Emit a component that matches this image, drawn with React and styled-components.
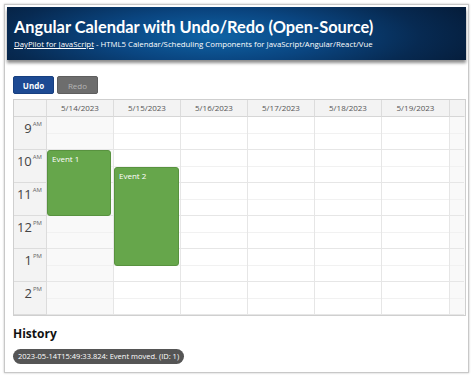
import React from 'react';
import styled, { createGlobalStyle } from 'styled-components';

const HOUR = 33;
const days = ['5/14/2023', '5/15/2023', '5/16/2023', '5/17/2023', '5/18/2023', '5/19/2023'];
const hours = [
  { h: '9', p: 'AM' },
  { h: '10', p: 'AM' },
  { h: '11', p: 'AM' },
  { h: '12', p: 'PM' },
  { h: '1', p: 'PM' },
  { h: '2', p: 'PM' },
];
const events = [
  { id: 1, day: 0, text: 'Event 1', start: 1, end: 3, width: 64 },
  { id: 2, day: 1, text: 'Event 2', start: 1.5, end: 4.5, width: 65 },
];

export default function App() {
  return (
    <>
      <GlobalStyle />
      <Frame>
        <Header>
          <Title>Angular Calendar with Undo/Redo (Open-Source)</Title>
          <Subtitle>
            <a href="#">DayPilot for JavaScript</a> - HTML5 Calendar/Scheduling Components for JavaScript/Angular/React/Vue
          </Subtitle>
        </Header>
        <Main>
          <Toolbar>
            <Button primary>Undo</Button>
            <Button>Redo</Button>
          </Toolbar>
          <Calendar>
            <HeadCell />
            {days.map(d => (
              <HeadCell key={d}>{d}</HeadCell>
            ))}
            <HeadCell $end />
            <TimeColumn>
              {hours.map(t => (
                <TimeCell key={t.h}>
                  {t.h}
                  <sup>{t.p}</sup>
                </TimeCell>
              ))}
            </TimeColumn>
            {days.map((d, i) => (
              <DayColumn key={d} $weekend={i === 0}>
                {hours.map(t => (
                  <Slot key={t.h} />
                ))}
                {events
                  .filter(e => e.day === i)
                  .map(e => (
                    <Event
                      key={e.id}
                      style={{ top: e.start * HOUR, height: (e.end - e.start) * HOUR, width: e.width }}
                    >
                      {e.text}
                    </Event>
                  ))}
              </DayColumn>
            ))}
            <DayColumn $weekend $end>
              {hours.map(t => (
                <Slot key={t.h} />
              ))}
            </DayColumn>
          </Calendar>
          <HistoryTitle>History</HistoryTitle>
          <Pill>2023-05-14T15:49:33.824: Event moved. (ID: 1)</Pill>
        </Main>
      </Frame>
    </>
  );
}

const GlobalStyle = createGlobalStyle`
  body {
    margin: 0;
    background: #fff;
    font-family: "Open Sans", "Noto Sans", sans-serif;
  }
`;

const Frame = styled.div`
  margin: 4px;
  width: 465px;
  height: 369px;
  box-sizing: border-box;
  border: 1px solid #c8c8c8;
  box-shadow: 0 0 2px rgba(0, 0, 0, 0.25);
  padding: 2px 2px 0 2px;
  overflow: hidden;
`;

const Header = styled.div`
  height: 53px;
  box-sizing: border-box;
  padding: 9px 7px 0;
  background: radial-gradient(ellipse 60% 120% at 45% 55%, #0f64a6 0%, #0a4580 40%, #072a52 75%, #051d3b 100%);
  box-shadow: 0 3px 3px rgba(0, 0, 0, 0.45);
  color: #fff;
`;

const Title = styled.h1`
  margin: 0;
  font-family: Lato, "Open Sans", sans-serif;
  font-size: 16.4px;
  line-height: 22px;
  font-weight: 700;
`;

const Subtitle = styled.div`
  font-size: 7.8px;
  line-height: 12px;
  a {
    color: #fff;
    text-decoration: underline;
  }
`;

const Main = styled.div`
  padding: 16px 0 0 6px;
`;

const Toolbar = styled.div`
  display: flex;
  gap: 3px;
`;

const Button = styled.button`
  width: 41px;
  height: 18px;
  padding: 0;
  border: 1px solid ${p => (p.primary ? '#173f80' : '#5e5e5e')};
  border-radius: 2px;
  background: ${p => (p.primary ? '#1d4a93' : '#6d6d6d')};
  color: ${p => (p.primary ? '#fff' : '#b5b5b5')};
  font-family: inherit;
  font-size: 8px;
  font-weight: ${p => (p.primary ? 700 : 400)};
`;

const Calendar = styled.div`
  margin-top: 5px;
  width: 453px;
  box-sizing: border-box;
  border: 1px solid #cfcfcf;
  display: grid;
  grid-template-columns: 33px repeat(5, 67px) 68px 1fr;
  grid-template-rows: 17px auto;
`;

const HeadCell = styled.div`
  background: #f3f3f3;
  border-right: 1px solid ${p => (p.$end ? 'transparent' : '#dcdcdc')};
  border-bottom: 1px solid #d6d6d6;
  box-sizing: border-box;
  color: #555;
  font-size: 8px;
  line-height: 16px;
  text-align: center;
`;

const TimeColumn = styled.div`
  background: #f3f3f3;
  border-right: 1px solid #dcdcdc;
`;

const TimeCell = styled.div`
  height: ${HOUR}px;
  box-sizing: border-box;
  border-bottom: 1px solid #dcdcdc;
  padding: 3px 4px 0 0;
  text-align: right;
  color: #444;
  font-size: 13px;
  line-height: 16px;
  sup {
    font-size: 6px;
    vertical-align: top;
    line-height: 8px;
    margin-left: 1px;
    color: #666;
  }
`;

const DayColumn = styled.div`
  position: relative;
  background: ${p => (p.$weekend ? '#f9f9f9' : '#fff')};
  border-right: 1px solid ${p => (p.$end ? 'transparent' : '#e6e6e6')};
`;

const Slot = styled.div`
  height: ${HOUR}px;
  box-sizing: border-box;
  border-bottom: 1px solid #e6e6e6;
  background: linear-gradient(to bottom, transparent 16px, #f1f1f1 16px, #f1f1f1 17px, transparent 17px);
`;

const Event = styled.div`
  position: absolute;
  left: 0;
  box-sizing: border-box;
  background: #66a64b;
  border: 1px solid #58923f;
  border-radius: 3px;
  color: #fff;
  font-size: 8px;
  line-height: 10px;
  padding: 3px 4px;
`;

const HistoryTitle = styled.h2`
  margin: 10px 0 0;
  font-size: 12px;
  line-height: 16px;
  font-weight: 700;
  color: #111;
`;

const Pill = styled.div`
  display: inline-block;
  margin-top: 5px;
  height: 15px;
  line-height: 15px;
  padding: 0 5px;
  border-radius: 8px;
  background: #555;
  color: #fff;
  font-size: 7.5px;
`;
